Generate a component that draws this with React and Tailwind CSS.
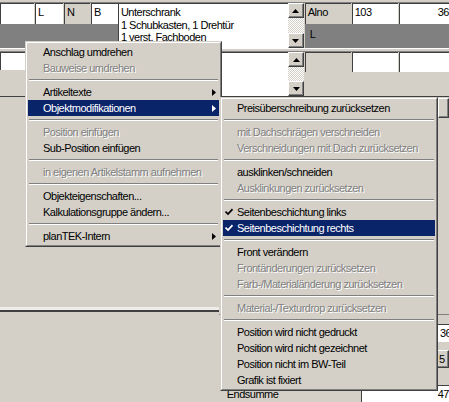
import React from "react";

// classic win2000 look: raised / sunken edges
const raised =
  "border border-t-white border-l-white border-r-[#404040] border-b-[#404040] shadow-[inset_-1px_-1px_0_#808080]";
const sunken = "border-l border-t border-l-[#404040] border-t-[#404040]";

function ScrollBtn({ down }) {
  return (
    <div className={`h-[15px] flex items-center justify-center bg-[#d4d0c8] ${raised}`}>
      <svg width="7" height="4" viewBox="0 0 7 4">
        <path d={down ? "M0 0H7L3.5 4Z" : "M0 4H7L3.5 0Z"} fill="#000" />
      </svg>
    </div>
  );
}

function ScrollBar() {
  return (
    <div className="w-[16px] flex flex-col">
      <ScrollBtn />
      <div className="flex-1 bg-[repeating-conic-gradient(#ffffff_0_25%,#d4d0c8_0_50%)] bg-[length:2px_2px]" />
      <ScrollBtn down />
    </div>
  );
}

function Arrow({ white }) {
  return (
    <svg width="4" height="7" viewBox="0 0 4 7" className="absolute right-[3px] top-[5px]">
      <path d="M0 0L4 3.5L0 7Z" fill={white ? "#ffffff" : "#000000"} />
    </svg>
  );
}

function Check({ white }) {
  return (
    <svg width="8" height="8" viewBox="0 0 8 8" className="absolute left-[2px] top-[4px]">
      <path d="M0.5 3.5L3 6L7.5 1.2" fill="none" stroke={white ? "#ffffff" : "#000000"} strokeWidth="1.7" />
    </svg>
  );
}

function Item({ label, disabled, active, arrow, checked, pl = "pl-[15px]" }) {
  const tone = active
    ? "bg-[#0a246a] text-white"
    : disabled
    ? "text-[#808080] [text-shadow:1px_1px_0_#ffffff]"
    : "text-black";
  return (
    <div className={`relative h-[16px] flex items-center whitespace-nowrap ${pl} ${tone}`}>
      {checked && <Check white={active} />}
      {label}
      {arrow && <Arrow white={active} />}
    </div>
  );
}

function Sep() {
  return (
    <div className="h-[8px] flex flex-col justify-center px-px">
      <div className="h-px bg-[#808080]" />
      <div className="h-px bg-white" />
    </div>
  );
}

function Menu({ className, children }) {
  return (
    <div
      className={`absolute bg-[#d4d0c8] border border-t-[#d4d0c8] border-l-[#d4d0c8] border-r-[#404040] border-b-[#404040] ${className}`}
    >
      <div className="border border-t-white border-l-white border-r-[#808080] border-b-[#808080] p-px">
        {children}
      </div>
    </div>
  );
}

export default function App() {
  return (
    <div className="w-[449px] h-[402px] relative overflow-hidden bg-[#d4d0c8] font-['Liberation_Sans',Arial,sans-serif] text-[11px] tracking-[-0.5px] text-black">
      {/* background grid */}
      <div className="h-[3px] border-b border-[#808080]" />

      {/* row A */}
      <div className="flex h-[45px]">
        <div className="w-[118px] flex flex-col">
          <div className="h-[21px] flex gap-px">
            <div className={`w-[34px] bg-white ${sunken}`} />
            <div className={`w-[28px] bg-white pl-[2px] ${sunken}`}>L</div>
            <div className={`w-[26px] bg-[#d4d0c8] pl-[2px] ${sunken}`}>N</div>
            <div className={`flex-1 bg-white pl-[2px] ${sunken}`}>B</div>
          </div>
          <div className="flex-1 bg-[#808080]" />
        </div>
        <div className={`w-[170px] bg-white pl-[2px] pt-[2px] leading-[12.5px] ${sunken}`}>
          <div>Unterschrank</div>
          <div>1 Schubkasten, 1 Drehtür</div>
          <div>1 verst. Fachboden</div>
        </div>
        <ScrollBar />
        <div className="flex-1 flex flex-col ml-px">
          <div className="h-[21px] flex gap-px">
            <div className={`w-[46px] bg-[#d4d0c8] pl-[2px] ${sunken}`}>Alno</div>
            <div className={`w-[46px] bg-white pl-[2px] ${sunken}`}>103</div>
            <div className={`flex-1 bg-white pl-[38px] overflow-hidden ${sunken}`}>36</div>
          </div>
          <div className="flex-1 bg-[#808080] pl-[5px] pt-[2px]">L</div>
        </div>
      </div>

      <div className="h-[4px] border-t border-t-white border-b border-b-[#808080]" />

      {/* row B */}
      <div className="flex h-[45px] border-b border-[#404040]">
        <div className="w-[118px] flex flex-col">
          <div className={`h-[18px] bg-white ${sunken}`} />
        </div>
        <div className={`w-[170px] bg-white ${sunken}`} />
        <ScrollBar />
        <div className="flex-1 flex flex-col ml-px">
          <div className="h-[20px] flex gap-px">
            <div className={`w-[46px] bg-[#d4d0c8] ${sunken}`} />
            <div className={`w-[46px] bg-white ${sunken}`} />
            <div className={`flex-1 bg-white ${sunken}`} />
          </div>
          <div className="flex-1 bg-[#d4d0c8]" />
        </div>
      </div>

      {/* button row */}
      <div className="h-[21px] flex justify-end gap-[2px] pt-px">
        <div className={`w-[100px] bg-[#d4d0c8] ${raised}`} />
        <div className={`w-[11px] bg-[#d4d0c8] ${raised}`} />
      </div>

      {/* lower area */}
      <div className="flex h-[284px]">
        <div className="w-[220px] flex flex-col">
          <div className="h-[189px]" />
          <div className="h-[3px] bg-[#efede8]" />
          <div className="h-[2px] bg-[#404040]" />
          <div className="flex-1" />
        </div>
        <div className="flex-1 flex flex-col">
          <div className="h-[203px] border-b border-[#808080]" />
          <div className="h-[36px] flex items-center justify-end">
            <div className={`w-[86px] h-[18px] bg-white pl-[76px] overflow-hidden ${sunken}`}>36</div>
          </div>
          <div className="h-[18px] flex justify-end">
            <div className={`w-[12px] bg-[#d4d0c8] pl-[1px] overflow-hidden ${raised}`}>5</div>
          </div>
          <div className="h-[17px]" />
          <div className="flex-1 flex">
            <div className="w-[142px] pl-[8px] pt-[1px]">Endsumme</div>
            <div className={`flex-1 bg-white pl-[76px] overflow-hidden ${sunken}`}>47</div>
          </div>
        </div>
      </div>

      {/* context menu */}
      <Menu className="left-[25px] top-[41px] w-[197px]">
        <Item label="Anschlag umdrehen" />
        <Item label="Bauweise umdrehen" disabled />
        <Sep />
        <Item label="Artikeltexte" arrow />
        <Item label="Objektmodifikationen" arrow active />
        <Sep />
        <Item label="Position einfügen" disabled />
        <Item label="Sub-Position einfügen" />
        <Sep />
        <Item label="in eigenen Artikelstamm aufnehmen" disabled />
        <Sep />
        <Item label="Objekteigenschaften..." />
        <Item label="Kalkulationsgruppe ändern..." />
        <Sep />
        <Item label="planTEK-Intern" arrow />
      </Menu>

      {/* submenu */}
      <Menu className="left-[220px] top-[97px] w-[218px]">
        <Item pl="pl-[14px]" label="Preisüberschreibung zurücksetzen" />
        <Sep />
        <Item pl="pl-[14px]" label="mit Dachschrägen verschneiden" disabled />
        <Item pl="pl-[14px]" label="Verschneidungen mit Dach zurücksetzen" disabled />
        <Sep />
        <Item pl="pl-[14px]" label="ausklinken/schneiden" />
        <Item pl="pl-[14px]" label="Ausklinkungen zurücksetzen" disabled />
        <Sep />
        <Item pl="pl-[14px]" label="Seitenbeschichtung links" checked />
        <Item pl="pl-[14px]" label="Seitenbeschichtung rechts" checked active />
        <Sep />
        <Item pl="pl-[14px]" label="Front verändern" />
        <Item pl="pl-[14px]" label="Frontänderungen zurücksetzen" disabled />
        <Item pl="pl-[14px]" label="Farb-/Materialänderung zurücksetzen" disabled />
        <Sep />
        <Item pl="pl-[14px]" label="Material-/Texturdrop zurücksetzen" disabled />
        <Sep />
        <Item pl="pl-[14px]" label="Position wird nicht gedruckt" />
        <Item pl="pl-[14px]" label="Position wird nicht gezeichnet" />
        <Item pl="pl-[14px]" label="Position nicht im BW-Teil" />
        <Item pl="pl-[14px]" label="Grafik ist fixiert" />
      </Menu>
    </div>
  );
}
